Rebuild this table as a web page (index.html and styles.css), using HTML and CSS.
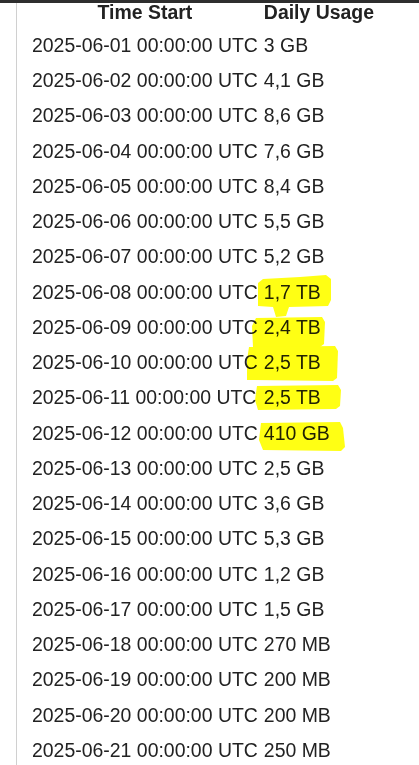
FILE: index.html
```html
<!DOCTYPE html>
<html lang="en">
<head>
<meta charset="UTF-8">
<meta name="viewport" content="width=device-width, initial-scale=1.0">
<title>Daily Usage</title>
<link rel="stylesheet" href="styles.css">
</head>
<body>
<div class="page">
    <div class="panel">
        <table class="usage">
            <thead>
                <tr><th>Time Start</th><th>Daily Usage</th></tr>
            </thead>
            <tbody>
                <tr><td>2025-06-01 00:00:00 UTC</td><td>3 GB</td></tr>
                <tr><td>2025-06-02 00:00:00 UTC</td><td>4,1 GB</td></tr>
                <tr><td>2025-06-03 00:00:00 UTC</td><td>8,6 GB</td></tr>
                <tr><td>2025-06-04 00:00:00 UTC</td><td>7,6 GB</td></tr>
                <tr><td>2025-06-05 00:00:00 UTC</td><td>8,4 GB</td></tr>
                <tr><td>2025-06-06 00:00:00 UTC</td><td>5,5 GB</td></tr>
                <tr><td>2025-06-07 00:00:00 UTC</td><td>5,2 GB</td></tr>
                <tr><td>2025-06-08 00:00:00 UTC</td><td>1,7 TB</td></tr>
                <tr><td>2025-06-09 00:00:00 UTC</td><td>2,4 TB</td></tr>
                <tr><td>2025-06-10 00:00:00 UTC</td><td>2,5 TB</td></tr>
                <tr><td>2025-06-11 00:00:00 UTC</td><td>2,5 TB</td></tr>
                <tr><td>2025-06-12 00:00:00 UTC</td><td>410 GB</td></tr>
                <tr><td>2025-06-13 00:00:00 UTC</td><td>2,5 GB</td></tr>
                <tr><td>2025-06-14 00:00:00 UTC</td><td>3,6 GB</td></tr>
                <tr><td>2025-06-15 00:00:00 UTC</td><td>5,3 GB</td></tr>
                <tr><td>2025-06-16 00:00:00 UTC</td><td>1,2 GB</td></tr>
                <tr><td>2025-06-17 00:00:00 UTC</td><td>1,5 GB</td></tr>
                <tr><td>2025-06-18 00:00:00 UTC</td><td>270 MB</td></tr>
                <tr><td>2025-06-19 00:00:00 UTC</td><td>200 MB</td></tr>
                <tr><td>2025-06-20 00:00:00 UTC</td><td>200 MB</td></tr>
                <tr><td>2025-06-21 00:00:00 UTC</td><td>250 MB</td></tr>
            </tbody>
        </table>
    </div>
    <!-- hand-drawn highlighter marks over the big days -->
    <svg class="marker" width="419" height="765" viewBox="0 0 419 765">
        <path d="M258,283 L263,279 L300,277 L326,275 L331,279 L331,300 L328,306 L289,307 L286,316 L276,317 L273,307 L258,306 Z"/>
        <path d="M256,318 L322,317 L325,322 L324,344 L320,347 L253,347 L252,326 Z"/>
        <path d="M249,347 L335,346 L338,351 L337,378 L333,381 L247,380 L247,360 Z"/>
        <path d="M257,386 L338,385 L341,390 L340,406 L336,409 L258,410 L255,400 Z"/>
        <path d="M261,423 L340,422 L343,428 L345,447 L341,451 L263,450 L259,440 Z"/>
    </svg>
</div>
</body>
</html>
```

FILE: styles.css
```css
body {
    margin: 0;
    font-family: "Liberation Sans", Arial, sans-serif;
    color: #222;
    background-color: #fff;
    overflow: hidden;
}
.page {
    position: relative;
    height: 762px;
    border-top: 3px solid #2e2e2e;
}
.panel {
    height: 100%;
    margin-left: 16px;
    border-left: 1px solid #d0d0d0;
}
.usage {
    margin-left: 12px;
    border-collapse: separate;
    border-spacing: 0;
    font-size: 19.45px;
}
.usage th {
    line-height: 18px;
    padding: 0 3px 6.2px;
    text-align: center;
    font-weight: bold;
}
.usage td {
    line-height: 22px;
    padding: 6.64px 3px;
    white-space: nowrap;
}
.marker {
    position: absolute;
    top: -3px;
    left: 0;
    pointer-events: none;
    mix-blend-mode: multiply;
}
.marker path {
    fill: #ffff14;
}
```
